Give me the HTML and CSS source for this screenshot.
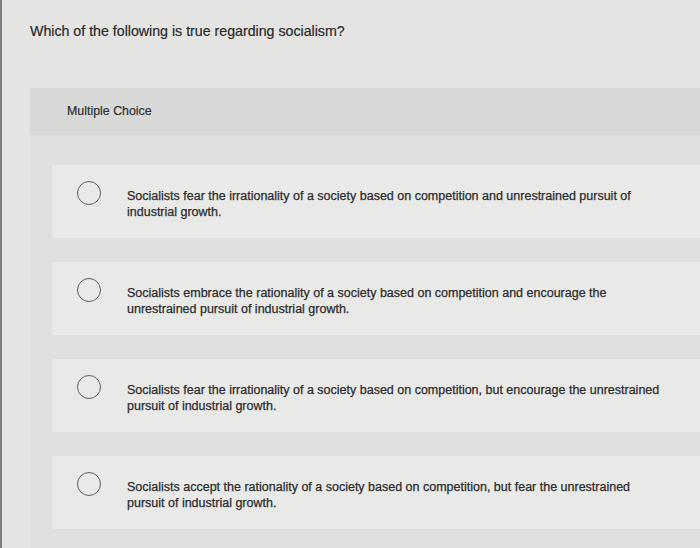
FILE: index.html
```html
<!DOCTYPE html>
<html lang="en">
<head>
<meta charset="utf-8">
<title>Question</title>
<link rel="stylesheet" href="styles.css">
</head>
<body>
<div class="page">
  <p class="question">Which of the following is true regarding socialism?</p>
  <section class="panel">
    <div class="panel-head">Multiple Choice</div>
    <ul class="options">
      <li class="option">
        <span class="radio"></span>
        <span class="label">Socialists fear the irrationality of a society based on competition and unrestrained pursuit of industrial growth.</span>
      </li>
      <li class="option">
        <span class="radio"></span>
        <span class="label">Socialists embrace the rationality of a society based on competition and encourage the unrestrained pursuit of industrial growth.</span>
      </li>
      <li class="option">
        <span class="radio"></span>
        <span class="label">Socialists fear the irrationality of a society based on competition, but encourage the unrestrained pursuit of industrial growth.</span>
      </li>
      <li class="option">
        <span class="radio"></span>
        <span class="label">Socialists accept the rationality of a society based on competition, but fear the unrestrained pursuit of industrial growth.</span>
      </li>
    </ul>
  </section>
</div>
</body>
</html>
```

FILE: styles.css
```css
html, body {
  margin: 0;
  padding: 0;
  height: 100%;
}
body {
  background: #e4e4e2;
  font-family: "Liberation Sans", Arial, sans-serif;
  color: #2f2f31;
  overflow: hidden;
}
.page {
  box-sizing: border-box;
  height: 548px;
  border-left: 2px solid #7d7d7c;
  padding-left: 28px;
}
.question {
  margin: 0;
  padding-top: 22px;
  font-size: 14.2px;
  line-height: 18px;
  height: 66px;
  color: #2a2a2c;
  -webkit-text-stroke: 0.2px #2a2a2c;
}
.panel {
  background: #dfdfdd;
  height: 460px;
}
.panel-head {
  box-sizing: border-box;
  height: 47px;
  background: #d8d8d6;
  padding: 15px 0 0 37px;
  font-size: 12.4px;
  line-height: 16px;
  color: #2f2f31;
  -webkit-text-stroke: 0.2px #2f2f31;
}
.options {
  list-style: none;
  margin: 0;
  padding: 30px 0 0 22px;
  display: flex;
  flex-direction: column;
  gap: 24px;
}
.option {
  box-sizing: border-box;
  height: 73px;
  background: #e9e9e7;
  display: flex;
  align-items: flex-start;
  padding: 16px 0 0 25px;
}
.radio {
  flex: none;
  box-sizing: border-box;
  width: 24px;
  height: 24px;
  border: 1.5px solid #5e5e64;
  border-radius: 50%;
}
.label {
  margin: 7px 0 0 26px;
  width: 538px;
  font-size: 12.5px;
  line-height: 16px;
  color: #2c2c2e;
  -webkit-text-stroke: 0.25px #2c2c2e;
}
```
